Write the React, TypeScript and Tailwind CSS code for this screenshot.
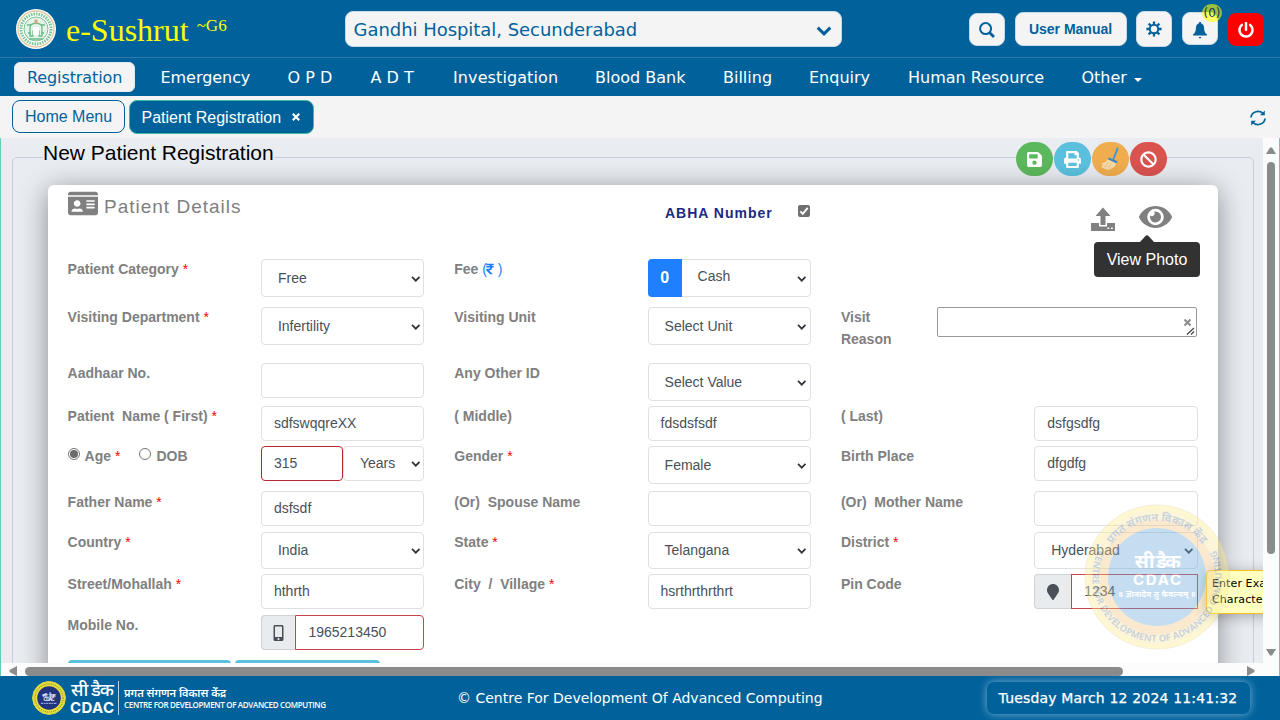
import type { ReactNode } from 'react';
import {
  FaSave,
  FaPrint,
  FaBan,
  FaEye,
  FaIdCard,
  FaMobileAlt,
  FaMapMarker,
  FaRupeeSign,
  FaPowerOff,
} from 'react-icons/fa';

const SEAL_TOP = 'प्रगत संगणन विकास केंद्र';
const SEAL_BOTTOM = 'CENTRE FOR DEVELOPMENT OF ADVANCED COMPUTING';

function Chevron({ className = '' }: { className?: string }) {
  return (
    <svg viewBox="0 0 10 7" className={className} fill="none" stroke="currentColor" strokeWidth="1.9">
      <path d="M1 1l4 4 4-4" />
    </svg>
  );
}

function Req() {
  return <span className="font-normal text-[#ff0000]"> *</span>;
}

function Label({ children, required }: { children: ReactNode; required?: boolean }) {
  return (
    <div className="-mt-px w-[193.33px] shrink-0 pl-[15px] text-[14px] font-bold leading-[22px] whitespace-pre text-[#808080]">
      {children}
      {required && <Req />}
    </div>
  );
}

function Input({ value = '' }: { value?: string }) {
  return (
    <div className="flex h-[35px] w-full items-center rounded-[4px] border border-[#dee0e2] bg-white px-3 text-[14px] text-[#495057]">
      {value}
    </div>
  );
}

function Select({ value, height = 'h-[38px]' }: { value: string; height?: string }) {
  return (
    <div
      className={`flex w-full items-center justify-between rounded-[4px] border border-[#dee0e2] bg-white pr-[3px] pl-4 text-[14px] text-[#495057] ${height}`}
    >
      <span>{value}</span>
      <Chevron className="mt-0.5 h-[6.5px] w-[9.5px] text-[#303438]" />
    </div>
  );
}

function Field({ label, required, children }: { label: ReactNode; required?: boolean; children?: ReactNode }) {
  return (
    <div className="flex w-[386.67px] shrink-0 items-start">
      <Label required={required}>{label}</Label>
      <div className="flex w-[193.33px] px-[15px]">{children}</div>
    </div>
  );
}

function Row({ height, children }: { height: string; children: ReactNode }) {
  return <div className={`flex shrink-0 items-start ${height}`}>{children}</div>;
}

function Radio({ checked }: { checked?: boolean }) {
  return (
    <span className="flex size-[12px] items-center justify-center rounded-full border border-[#767676] bg-white">
      {checked && <span className="size-[8px] rounded-full bg-[#6b6b6b]" />}
    </span>
  );
}

function StateEmblem() {
  return (
    <svg viewBox="0 0 40 40" className="size-10">
      <circle cx="20" cy="20" r="20" fill="#fff" />
      <circle cx="20" cy="20" r="18" fill="none" stroke="#e0c9a0" strokeWidth="1.3" />
      <circle cx="20" cy="20" r="15" fill="none" stroke="#7cc79a" strokeWidth="3" strokeDasharray="1.6 1" />
      <circle cx="20" cy="20" r="12" fill="#e3f3e8" stroke="#5cb583" strokeWidth="0.8" />
      <path d="M14 27V18q0-3 6-4 6 1 6 4v9h-3v-5q-3-3-6 0v5z" fill="none" stroke="#69bb8b" strokeWidth="1.3" />
      <path d="M11 16h4M25 16h4M12 24h3M25 24h3M13 30h14" stroke="#69bb8b" strokeWidth="1.6" />
      <rect x="17" y="18" width="6" height="8" fill="#fff" />
      <path d="M18.5 14.5v-4h3v4z" fill="#d8a780" />
    </svg>
  );
}

function Seal() {
  return (
    <svg viewBox="0 0 146 146" className="size-[146px]">
      <defs>
        <path id="seal-top" d="M17 73a56 56 0 0 1 112 0" />
        <path id="seal-bottom" d="M18.6 38A64.7 64.7 0 1 0 127.4 38" />
      </defs>
      <circle cx="73" cy="73" r="72" fill="#fbe7a0" stroke="#e6d6a0" />
      <circle cx="73" cy="73" r="69.500" fill="none" stroke="#fff08a" strokeWidth="3" />
      <circle cx="73" cy="73" r="53" fill="none" stroke="#f3c98a" strokeWidth="9" />
      <circle cx="73" cy="73" r="49" fill="#6fabdc" />
      <text fill="#7d93ad" fontSize="11" fontFamily="Noto Sans, sans-serif" fontWeight="700" textAnchor="middle">
        <textPath href="#seal-top" startOffset="50%">{SEAL_TOP}</textPath>
      </text>
      <text fill="#7d93ad" fontSize="9.4" fontFamily="Open Sans, sans-serif" fontWeight="700" textAnchor="middle">
        <textPath href="#seal-bottom" startOffset="50%">{SEAL_BOTTOM}</textPath>
      </text>
      <g fill="#fff" fontFamily="Noto Sans, sans-serif" fontWeight="700" textAnchor="middle">
        <text x="73" y="64" fontSize="19" textLength="46">सी डैक</text>
        <text x="73" y="81" fontSize="15" fontFamily="Inter, sans-serif" textLength="48">CDAC</text>
        <text x="73" y="93" fontSize="8" textLength="78">॥ ज्ञानादेव तु कैवल्यम् ॥</text>
      </g>
    </svg>
  );
}

function FooterSeal() {
  return (
    <svg viewBox="0 0 34 34" className="size-[34px] shrink-0">
      <circle cx="17" cy="17" r="16.4" fill="#e9e13a" stroke="#d8d040" />
      <circle cx="17" cy="17" r="14" fill="none" stroke="#8f9433" strokeWidth="1.3" strokeDasharray="1 1.1" />
      <circle cx="17" cy="17" r="11.8" fill="#22347f" />
      <g fill="#fff" textAnchor="middle" fontWeight="700">
        <text x="17" y="15.5" fontSize="5" fontFamily="Noto Sans, sans-serif">सी डैक</text>
        <text x="17" y="20" fontSize="4.4" fontFamily="Inter, sans-serif" textLength="11">CDAC</text>
      </g>
      <path d="M9 22.3h16" stroke="#b7bfe0" strokeWidth="1" strokeDasharray="2 .6" />
    </svg>
  );
}

function Broom() {
  return (
    <svg viewBox="0 0 20 24" className="h-6 w-5">
      <path d="M17.5 1.5L13.5 12" stroke="#3b9ad9" strokeWidth="2" strokeLinecap="round" />
      <path d="M9 10.500l8.500 3.800-1.200 2.200-8.700-4z" fill="#3b88c3" />
      <path d="M7.500 12.300l8.600 4Q15.500 20.500 9.500 22.600 4.500 23 1 19.500q1.500-.6 2-2-1-.2-1.800-1Q6 15.800 7.500 12.300z" fill="#f6dba6" />
      <path d="M8.500 15l-4 5M11.500 16.300l-3.500 5" stroke="#dfbd84" strokeWidth="0.8" />
    </svg>
  );
}

function Gear() {
  return (
    <svg viewBox="0 0 16 16" className="size-4 text-[#01629b]" fill="none" stroke="currentColor">
      <circle cx="8" cy="8" r="4.200" strokeWidth="2" />
      <path
        strokeWidth="2.300"
        d="M8 .4v3M8 12.600v3M.4 8h3M12.600 8h3M2.600 2.600l2.200 2.200M11.200 11.200l2.200 2.200M2.600 13.400l2.200-2.200M11.200 4.800l2.200-2.200"
      />
    </svg>
  );
}

const NAV: { text: string; cls: string }[] = [
  { text: 'Emergency', cls: 'w-[127px] tracking-[-0.05px]' },
  { text: 'O P D', cls: 'w-[83px]' },
  { text: 'A D T', cls: 'w-[82.5px]' },
  { text: 'Investigation', cls: 'w-[142px] tracking-[0.1px]' },
  { text: 'Blood Bank', cls: 'w-[128px]' },
  { text: 'Billing', cls: 'w-[86px]' },
  { text: 'Enquiry', cls: 'w-[99px]' },
  { text: 'Human Resource', cls: 'w-[173.5px]' },
];

function Header() {
  return (
    <header className="bg-[#01629b] font-['Verdana','DejaVu_Sans',sans-serif]">
      <div className="flex h-[58px] items-start border-b border-[#3279aa] pl-4">
        <div className="pt-[9px]">
          <StateEmblem />
        </div>
        <div className="ml-[10px] flex w-[278.5px] pt-[11px] font-['Liberation_Serif',serif] text-[#ffff00]">
          <span className="text-[32px] leading-[38px]">e-Sushrut</span>
          <span className="ml-[8px] text-[17px] leading-[29px]">~G6</span>
        </div>
        <div className="mt-[11px] flex h-[36px] w-[497px] items-center justify-between rounded-[8px] border border-[#c5d9e8] bg-[#f4f4f4] pr-[9px] pl-2 text-[#01629b]">
          <span className="text-[18px] tracking-[-0.04px]">Gandhi Hospital, Secunderabad</span>
          <Chevron className="mt-1 h-[11px] w-4" />
        </div>
        <div className="ml-[127px] mt-[13px] flex h-[33px] w-[36px] items-center justify-center rounded-[8px] border border-[#c5d9e8] bg-[#f4f4f4] text-[#01629b]">
          <svg viewBox="0 0 16 16" className="size-4" fill="none" stroke="currentColor">
            <circle cx="6.600" cy="6.600" r="5.500" strokeWidth="2" />
            <path d="M10.500 10.500l4.500 4.500" strokeWidth="2.800" />
          </svg>
        </div>
        <div className="ml-[10px] mt-3 flex h-[34px] w-[112px] items-center justify-center rounded-[8px] border border-[#c5d9e8] bg-[#f4f4f4] font-['Liberation_Sans',sans-serif] text-[14px] font-bold text-[#01629b]">
          User Manual
        </div>
        <div className="ml-[9.500px] mt-[11px] flex h-[36px] w-[36px] items-center justify-center rounded-[8px] border border-[#c5d9e8] bg-[#f4f4f4]">
          <Gear />
        </div>
        <div className="relative ml-[10px] mt-3 flex h-[33px] w-[36px] items-center justify-center rounded-[8px] border border-[#c5d9e8] bg-[#f4f4f4] text-[#01629b]">
          <svg viewBox="0 0 14 17" className="mt-1 h-[17px] w-[14px]" fill="currentColor">
            <path d="M7 0a1 1 0 0 1 1 1.300c2 .6 3 2.400 3.100 4.700.2 3.800.9 5 2.900 6.500v1H0v-1C2 11 2.700 9.800 2.900 6 3 3.700 4 1.900 6 1.300A1 1 0 0 1 7 0zM5.500 15h3L7 16.800z" />
          </svg>
          <span className="absolute -top-[9px] left-[19px] flex h-[18px] w-[20px] items-center justify-center rounded-full bg-[#ffff00]/60 text-[12px] leading-none text-[#1d3557]">
            (0)
          </span>
        </div>
        <div className="ml-[9.500px] mt-[13px] flex h-[33px] w-[36px] items-center justify-center rounded-[8px] bg-[#ff0000] text-white">
          <FaPowerOff className="size-4" />
        </div>
      </div>
      <nav className="flex h-[38px] items-center pl-[14px] text-[16px] text-white">
        <span className="flex h-[30px] w-[121px] items-center rounded-[6px] border border-[#dfe9f0] bg-[#f4f4f4] pt-0.5 pl-3 text-[#01629b]">
          <span className="tracking-[-0.1px]">Registration</span>
        </span>
        <span className="w-[25.500px]" />
        {NAV.map((n) => (
          <span key={n.text} className={`shrink-0 pt-0.5 whitespace-nowrap ${n.cls}`}>
            {n.text}
          </span>
        ))}
        <span className="pt-0.5">Other</span>
        <svg viewBox="0 0 8 4" className="mt-1.5 ml-[7px] h-1 w-2" fill="#fff">
          <path d="M0 0h8L4 4z" />
        </svg>
      </nav>
    </header>
  );
}

function TabBar() {
  return (
    <div className="flex h-[42px] items-start bg-[#f4f4f4] pl-3 text-[16px]">
      <span className="mt-1 flex h-[33px] w-[113px] items-center justify-center rounded-[8px] border border-[#01629b] text-[#01629b]">
        Home Menu
      </span>
      <span className="mt-1 ml-1 flex h-[34px] w-[184.5px] items-center rounded-[8px] border border-[#3fb9a5] bg-[#01629b] pt-px pl-[11.500px] text-white">
        Patient Registration
        <svg viewBox="0 0 8 8" className="-mt-px ml-[10.500px] size-2" stroke="#fff" strokeWidth="2.200">
          <path d="M.8.8l6.400 6.400M7.200.8L.8 7.200" />
        </svg>
      </span>
      <svg viewBox="0 0 16 16" className="mt-[14px] ml-auto mr-[14px] size-4" fill="none" stroke="#01629b" strokeWidth="1.700">
        <path d="M1 7.500A7 6.500 0 0 1 13.500 4M15 8.500A7 6.500 0 0 1 2.500 12" />
        <path d="M14.800.5v4.700H10zM1.200 15.500v-4.700H6z" fill="#01629b" stroke="none" />
      </svg>
    </div>
  );
}

function RoundButton({ color, children }: { color: string; children: ReactNode }) {
  return (
    <span className={`flex h-[34px] w-[37px] items-center justify-center rounded-full text-white ${color}`}>
      {children}
    </span>
  );
}

function PatientForm() {
  return (
    <div className="flex flex-col">
      <Row height="h-[48px]">
        <Field label="Patient Category" required>
          <Select value="Free" />
        </Field>
        <Field
          label={
            <span>
              Fee{' '}
              <span className="font-normal tracking-[-0.5px] text-[#1e7fff]">
                (<FaRupeeSign className="inline h-3 w-2 align-[-1px]" /> )
              </span>
            </span>
          }
        >
          <div className="flex h-[38px] w-full rounded-[4px] border border-[#dee0e2] text-[14px] text-[#495057]">
            <span className="-my-px -ml-px flex w-[34px] items-center justify-center rounded-l-[4px] bg-[#1e7fff] text-[16px] font-bold text-white">
              0
            </span>
            <span className="flex-1 pt-[6px] pl-4 leading-5">Cash</span>
            <Chevron className="mt-4 mr-[3px] h-[6.5px] w-[9.5px] text-[#303438]" />
          </div>
        </Field>
      </Row>
      <Row height="h-[56px]">
        <Field label="Visiting Department" required>
          <Select value="Infertility" />
        </Field>
        <Field label="Visiting Unit">
          <Select value="Select Unit" />
        </Field>
        <div className="flex items-start">
          <div className="-mt-px w-[111.500px] pl-[15px] text-[14px] font-bold leading-[22px] text-[#808080]">
            Visit
            <br />
            Reason
          </div>
          <div className="flex h-[30px] w-[260px] items-start justify-end rounded-[2px] border border-[#999] bg-white">
            <svg viewBox="0 0 13 20" className="mt-[8px] mr-px h-5 w-[13px]" fill="none">
              <path d="M2.500 3.500l6 6M8.500 3.500l-6 6" stroke="#8b8b8b" strokeWidth="2" />
              <path d="M5 18.500l7-6.500M9 18.500l3-3" stroke="#444" strokeWidth="1.200" />
            </svg>
          </div>
        </div>
      </Row>
      <Row height="h-[43px]">
        <Field label="Aadhaar No.">
          <Input />
        </Field>
        <Field label="Any Other ID">
          <Select value="Select Value" />
        </Field>
      </Row>
      <Row height="h-[40px]">
        <Field label="Patient  Name ( First)" required>
          <Input value="sdfswqqreXX" />
        </Field>
        <Field label="( Middle)">
          <Input value="fdsdsfsdf" />
        </Field>
        <Field label="( Last)">
          <Input value="dsfgsdfg" />
        </Field>
      </Row>
      <Row height="h-[45px]">
        <Field
          label={
            <span className="flex">
              <span className="mt-[3px] mr-[5px]">
                <Radio checked />
              </span>
              <span>
                Age
                <Req />
              </span>
              <span className="mt-[3px] mr-[5px] ml-[19px]">
                <Radio />
              </span>
              DOB
            </span>
          }
        >
          <div className="flex h-[35px] w-[82px] items-center rounded-[4px] border border-[#b5282f] bg-white px-3 text-[14px] text-[#495057]">
            315
          </div>
          <div className="w-[81.330px]">
            <Select value="Years" height="h-[35px]" />
          </div>
        </Field>
        <Field label="Gender" required>
          <Select value="Female" />
        </Field>
        <Field label="Birth Place">
          <Input value="dfgdfg" />
        </Field>
      </Row>
      <Row height="h-[41px]">
        <Field label={<span className="inline-block pt-px">Father Name<Req /></span>}>
          <Input value="dsfsdf" />
        </Field>
        <Field label={<span className="inline-block pt-px">(Or)  Spouse Name</span>}>
          <Input />
        </Field>
        <Field label={<span className="inline-block pt-px">(Or)  Mother Name</span>}>
          <Input />
        </Field>
      </Row>
      <Row height="h-[42px]">
        <Field label="Country" required>
          <Select value="India" height="h-[37px]" />
        </Field>
        <Field label="State" required>
          <Select value="Telangana" height="h-[37px]" />
        </Field>
        <Field label="District" required>
          <Select value="Hyderabad" height="h-[37px]" />
        </Field>
      </Row>
      <Row height="h-[41px]">
        <Field label="Street/Mohallah" required>
          <Input value="hthrth" />
        </Field>
        <Field label="City  /  Village" required>
          <Input value="hsrthrthrthrt" />
        </Field>
        <Field label="Pin Code">
          <span className="flex h-[35px] w-[37px] shrink-0 items-center justify-center rounded-l-[4px] border border-r-0 border-[#d0d3d6] bg-[#e9ecef]">
            <FaMapMarker className="h-4 w-3 text-[#495057]" />
          </span>
          <span className="flex h-[35px] flex-1 items-center border border-[#c8434a] bg-white px-3 text-[14px] text-[#495057]">
            1234
          </span>
        </Field>
      </Row>
      <Row height="h-[45px]">
        <Field label="Mobile No.">
          <span className="flex h-[35px] w-[34.500px] shrink-0 items-center justify-center rounded-l-[4px] border border-r-0 border-[#d0d3d6] bg-[#e9ecef]">
            <FaMobileAlt className="h-4 w-[11px] text-[#495057]" />
          </span>
          <span className="flex h-[35px] flex-1 items-center rounded-r-[4px] border border-[#c8434a] bg-white px-3 text-[14px] text-[#495057]">
            1965213450
          </span>
        </Field>
      </Row>
      <div className="flex gap-1 pl-[15px]">
        <span className="h-9 w-[163px] shrink-0 rounded-[4px] bg-[#5bc0de]" />
        <span className="h-9 w-[145px] shrink-0 rounded-[4px] bg-[#5bc0de]" />
      </div>
    </div>
  );
}

function Content() {
  return (
    <main className="relative h-[525px] w-[1262px] overflow-hidden bg-[#e9ecf1]">
      <div className="mt-[19px] ml-[11px] flex h-[560px] w-[1242px] flex-col rounded-[5px] border border-[#c9cddd]">
        <div className="-mt-[17px] flex h-[36px] items-start">
          <h1 className="ml-[30px] h-[22px] bg-[#e9ecf1] text-[21px] leading-[24px] tracking-[-0.02px] text-black">
            New Patient Registration
          </h1>
          <div className="mt-[1px] ml-auto mr-[86.500px] flex gap-[0.9px]">
            <RoundButton color="bg-[#5cb85c]">
              <FaSave className="size-[17px]" />
            </RoundButton>
            <RoundButton color="bg-[#5bc0de]">
              <FaPrint className="size-[17px]" />
            </RoundButton>
            <RoundButton color="bg-[#f0ad4e]">
              <Broom />
            </RoundButton>
            <RoundButton color="bg-[#d9534f]">
              <FaBan className="size-[17px]" />
            </RoundButton>
          </div>
        </div>
        <section className="mt-[9px] ml-[34.600px] h-[600px] w-[1170.500px] shrink-0 rounded-[6px] bg-white px-[5px] shadow-[0_5px_28px_rgba(0,0,0,0.42)]">
          <div className="flex h-[74px] items-start pl-[15px] text-[#808080]">
            <FaIdCard className="mt-[4px] h-[29px] w-[30px]" />
            <h2 className="mt-[10px] ml-[6.400px] w-[561px] text-[19px] leading-6 tracking-[1px]">Patient Details</h2>
            <span className="mt-[18px] w-[133px] text-[14px] font-bold leading-5 tracking-[1px] text-[#1b2a80]">
              ABHA Number
            </span>
            <svg viewBox="0 0 12 12" className="mt-[20px] size-3">
              <rect width="12" height="12" rx="2" fill="#6f6f6f" />
              <path d="M2.300 6.300l2.500 2.600L9.700 2.800" fill="none" stroke="#fff" strokeWidth="1.900" />
            </svg>
            <svg viewBox="0 0 24 24" className="mt-[22px] ml-[281.500px] size-6" fill="currentColor">
              <path d="M12 .5l7.500 8.500H14.500v9h-5V9H4.500zM0 16h8V19.500h8V16h8v8H0zM16.500 20.500v1.600h1.800v-1.600zM20 20.500v1.600h1.800v-1.600z" fillRule="evenodd" />
            </svg>
            <FaEye className="mt-[14px] ml-[23.500px] h-[36px] w-[33px]" />
          </div>
          <PatientForm />
        </section>
      </div>
      <div className="absolute top-[104px] left-[1093px] flex h-[35px] w-[106px] items-center justify-center rounded-[4px] bg-[#323232] text-[16px] text-white">
        View Photo
        <svg viewBox="0 0 14 7" className="absolute -top-[7px] left-[46px] h-[7px] w-[14px]" fill="#323232">
          <path d="M0 7L5.500 1Q7-.5 8.500 1L14 7z" />
        </svg>
      </div>
      <div className="absolute top-[432px] left-[1205px] w-[120px] rounded-[5px] border border-[#f5c324] bg-[#ffffc0] px-[5px] py-[5px] font-['DejaVu_Sans',sans-serif] text-[11px] leading-4 tracking-[0.1px] whitespace-nowrap text-black shadow-[0_2px_14px_rgba(0,0,0,0.3)]">
        Enter Exact 6
        <br />
        Characters
      </div>
      <div className="absolute top-[366px] left-[1083px] opacity-40">
        <Seal />
      </div>
    </main>
  );
}

function VerticalScrollbar() {
  return (
    <div className="flex h-[525px] w-4 flex-col items-center bg-[#fcfcfc]">
      <svg viewBox="0 0 10 7" className="mt-[9px] h-[7px] w-[10px]" fill="#8b8b8b">
        <path d="M4 .5h2L10 7H0z" />
      </svg>
      <div className="mt-2 h-[392px] w-2 rounded-full bg-[#8b8b8b]" />
      <svg viewBox="0 0 10 7" className="mt-auto mb-[7px] h-[7px] w-[10px]" fill="#8b8b8b">
        <path d="M4 6.500h2L10 0H0z" />
      </svg>
    </div>
  );
}

function HorizontalScrollbar() {
  return (
    <div className="flex h-[13px] items-center bg-[#fcfcfc] pt-[3px] pl-2">
      <svg viewBox="0 0 8 10" className="h-[10px] w-2" fill="#8b8b8b">
        <path d="M.5 4v2L8 10V0z" />
      </svg>
      <div className="ml-2 h-[9px] w-[1098px] rounded-full bg-[#8b8b8b]" />
      <svg viewBox="0 0 8 10" className="ml-auto mr-[24px] h-[10px] w-2" fill="#8b8b8b">
        <path d="M7.500 4v2L0 10V0z" />
      </svg>
    </div>
  );
}

function Footer() {
  return (
    <footer className="flex h-[44px] items-center bg-[#01629b] pl-8 text-white">
      <FooterSeal />
      <div className="ml-[4px] flex h-[38px] w-[46px] flex-col">
        <svg viewBox="0 0 46 38" className="h-[38px] w-[46px]" fill="#fff">
          <text x="0" y="17" fontSize="18" fontWeight="500" fontFamily="Noto Sans, sans-serif" textLength="43">
            सी डैक
          </text>
          <text x="0" y="34" fontSize="15" fontWeight="700" fontFamily="Inter, sans-serif" textLength="44">
            CDAC
          </text>
        </svg>
      </div>
      <div className="ml-[2px] h-[34px] w-px bg-[#b9d2e4]" />
      <div className="ml-[5px] flex w-[333px] flex-col whitespace-nowrap">
        <span className="font-['Noto_Sans',sans-serif] text-[11px] font-semibold leading-[13px]">{SEAL_TOP}</span>
        <span className="font-['Open_Sans',sans-serif] text-[8px] font-semibold leading-[11px] tracking-[-0.33px]">
          {SEAL_BOTTOM}
        </span>
      </div>
      <span className="w-[529.500px] font-['Verdana','DejaVu_Sans',sans-serif] text-[14px] whitespace-nowrap">
        © Centre For Development Of Advanced Computing
      </span>
      <span className="flex h-[32px] w-[263px] shrink-0 items-center justify-center rounded-[7px] font-['Verdana','DejaVu_Sans',sans-serif] text-[14px] tracking-[0.17px] whitespace-nowrap shadow-[0_0_8px_rgba(160,200,230,0.75)] [-webkit-text-stroke:0.25px_white]">
        Tuesday March 12 2024 11:41:32
      </span>
    </footer>
  );
}

export default function App() {
  return (
    <div className="h-[720px] w-[1280px] overflow-hidden bg-[#f4f4f4] font-['Liberation_Sans',Arial,sans-serif]">
      <Header />
      <TabBar />
      <div className="border-x border-[#63cdb8]">
        <div className="flex">
          <Content />
          <VerticalScrollbar />
        </div>
        <HorizontalScrollbar />
      </div>
      <Footer />
    </div>
  );
}
